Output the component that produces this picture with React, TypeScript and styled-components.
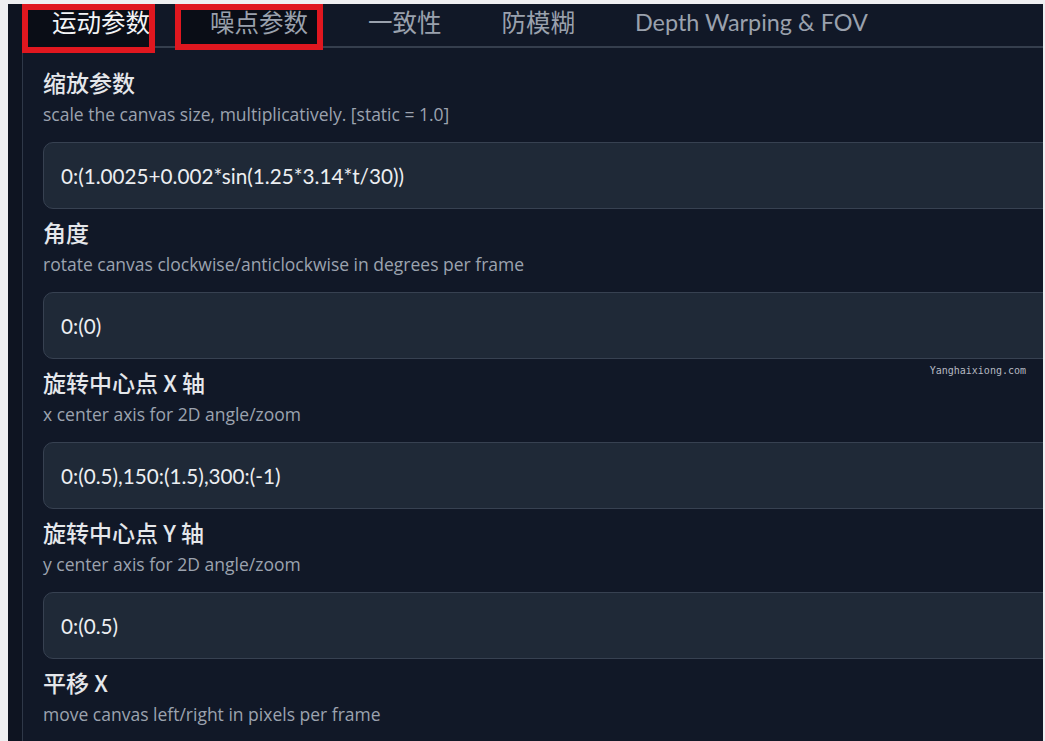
import styled, { createGlobalStyle } from 'styled-components'

const GlobalStyle = createGlobalStyle`
  html, body {
    margin: 0;
    padding: 0;
    background: #eeeff1;
  }
  body {
    font-family: Lato, 'Noto Sans', 'Noto Sans CJK SC', sans-serif;
    overflow: hidden;
  }
`

const Page = styled.div`
  height: 741px;
  padding: 4px 2px 0 8px;
  box-sizing: border-box;
`

const Frame = styled.div`
  position: relative;
  height: 100%;
  background: #0e1421;
  padding-left: 14px;
  overflow: hidden;
`

const Panel = styled.div`
  height: 100%;
  background: #111827;
  border-left: 1px solid #2f3848;
`

const TabBar = styled.div`
  display: flex;
  align-items: flex-start;
  height: 42px;
  border-bottom: 2px solid #353e4d;
  font-family: Lato, 'Noto Sans CJK SC', sans-serif;
`

const Tab = styled.div<{ $active?: boolean; $size?: number }>`
  position: relative;
  padding: 0 30px;
  font-size: ${p => p.$size ?? 24.5}px;
  line-height: 37px;
  white-space: nowrap;
  color: ${p => (p.$active ? '#f3f4f6' : '#9aa1ad')};
  z-index: 0;

  &:first-child {
    padding-left: 29px;
  }
`

// red annotation box drawn over the tab
const Mark = styled.span<{ $left: number; $right: number; $bottom: number }>`
  position: absolute;
  top: 0;
  left: ${p => p.$left}px;
  right: ${p => p.$right}px;
  bottom: ${p => p.$bottom}px;
  border: 6px solid #e0171f;
  background: #0a0d16;
  z-index: -1;
`

const Content = styled.div`
  padding: 20px 0 0 20px;
`

const Field = styled.div`
  margin-bottom: 9px;
`

const Label = styled.div`
  font-family: 'Noto Sans CJK SC', sans-serif;
  font-size: 23px;
  font-weight: 500;
  line-height: 28px;
  color: #e5e7eb;
`

const Desc = styled.div`
  margin-top: 8px;
  font-family: 'Open Sans', sans-serif;
  font-size: 17.5px;
  line-height: 20px;
  color: #9ca3af;
  white-space: nowrap;
`

const Input = styled.div`
  margin-top: 18px;
  width: calc(100% + 30px);
  height: 67px;
  box-sizing: border-box;
  display: flex;
  align-items: center;
  padding-left: 17px;
  background: #1f2937;
  border: 1px solid #374151;
  border-radius: 10px;
  font-size: 20.7px;
  color: #eceef1;
`

const Watermark = styled.span`
  position: absolute;
  top: 361px;
  right: 17px;
  font-family: 'DejaVu Sans Mono', monospace;
  font-size: 10px;
  color: #b5b9c1;
`

const fields = [
  {
    label: '缩放参数',
    desc: 'scale the canvas size, multiplicatively. [static = 1.0]',
    value: '0:(1.0025+0.002*sin(1.25*3.14*t/30))',
  },
  { label: '角度', desc: 'rotate canvas clockwise/anticlockwise in degrees per frame', value: '0:(0)' },
  { label: '旋转中心点 X 轴', desc: 'x center axis for 2D angle/zoom', value: '0:(0.5),150:(1.5),300:(-1)' },
  { label: '旋转中心点 Y 轴', desc: 'y center axis for 2D angle/zoom', value: '0:(0.5)' },
  { label: '平移 X', desc: 'move canvas left/right in pixels per frame' },
]

export default function App() {
  return (
    <>
      <GlobalStyle />
      <Page>
        <Frame>
          <Panel>
            <TabBar>
              <Tab $active>
                <Mark $left={-1} $right={25} $bottom={-12} />
                运动参数
              </Tab>
              <Tab>
                <Mark $left={-5} $right={15} $bottom={-9} />
                噪点参数
              </Tab>
              <Tab>一致性</Tab>
              <Tab>防模糊</Tab>
              <Tab $size={23.4}>Depth Warping &amp; FOV</Tab>
            </TabBar>
            <Content>
              {fields.map(f => (
                <Field key={f.label}>
                  <Label>{f.label}</Label>
                  <Desc>{f.desc}</Desc>
                  {f.value && <Input>{f.value}</Input>}
                </Field>
              ))}
            </Content>
          </Panel>
          <Watermark>Yanghaixiong.com</Watermark>
        </Frame>
      </Page>
    </>
  )
}
